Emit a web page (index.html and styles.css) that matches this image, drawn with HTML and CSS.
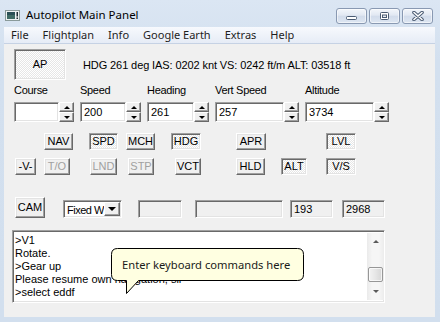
FILE: index.html
```html
<!DOCTYPE html>
<html lang="en">

<head>
    <link rel="stylesheet" href="styles.css">
    <title>Autopilot Main Panel</title>
</head>

<body>
    <div class="window">
        <div class="titlebar">
            <svg class="app-icon" width="15" height="11" viewBox="0 0 15 11">
                <rect x="0.5" y="0.5" width="14" height="10" fill="#eef2f2" stroke="#8a9a9a" />
                <rect x="2" y="2" width="8" height="7" fill="#3f6b64" />
                <rect x="2" y="2" width="8" height="3" fill="#2a4f55" />
                <rect x="11.5" y="2" width="1.5" height="4.5" fill="#1d2a30" />
                <rect x="11.5" y="7.5" width="1.5" height="1.5" fill="#1d2a30" />
            </svg>
            <span class="title">Autopilot Main Panel</span>
            <div class="caption">
                <span class="cap-btn">
                    <svg width="13" height="9" viewBox="0 0 13 9">
                        <rect x="1.5" y="4.5" width="10" height="3" rx="1" fill="#fff" stroke="#4a5b73" />
                    </svg>
                </span>
                <span class="cap-btn">
                    <svg width="13" height="10" viewBox="0 0 13 10">
                        <rect x="2.5" y="1.5" width="8" height="7" rx="1" fill="#fff" stroke="#4a5b73" />
                        <rect x="4.5" y="4" width="4" height="2.5" fill="#e4eaf2" stroke="#4a5b73" />
                    </svg>
                </span>
                <span class="cap-btn">
                    <svg width="14" height="10" viewBox="0 0 14 10">
                        <path d="M3 1.5 L11 8.5 M11 1.5 L3 8.5" stroke="#4a5b73" stroke-width="3.6" stroke-linecap="round" />
                        <path d="M3 1.5 L11 8.5 M11 1.5 L3 8.5" stroke="#fff" stroke-width="1.6" stroke-linecap="round" />
                    </svg>
                </span>
            </div>
        </div>

        <div class="menubar">
            <span>File</span>
            <span>Flightplan</span>
            <span>Info</span>
            <span>Google Earth</span>
            <span>Extras</span>
            <span>Help</span>
        </div>

        <div class="client">
            <div class="top-row">
                <button class="btn checked ap">AP</button>
                <span class="status">HDG 261 deg IAS: 0202 knt VS: 0242 ft/m ALT: 03518 ft</span>
            </div>

            <div class="spinners">
                <div class="field f-course">
                    <label>Course</label>
                    <div class="spin">
                        <div class="edit"></div>
                        <div class="spin-btns"><span class="sb up"></span><span class="sb down"></span></div>
                    </div>
                </div>
                <div class="field f-speed">
                    <label>Speed</label>
                    <div class="spin">
                        <div class="edit">200</div>
                        <div class="spin-btns"><span class="sb up"></span><span class="sb down"></span></div>
                    </div>
                </div>
                <div class="field f-heading">
                    <label>Heading</label>
                    <div class="spin">
                        <div class="edit">261</div>
                        <div class="spin-btns"><span class="sb up"></span><span class="sb down"></span></div>
                    </div>
                </div>
                <div class="field f-vs">
                    <label>Vert Speed</label>
                    <div class="spin">
                        <div class="edit">257</div>
                        <div class="spin-btns"><span class="sb up"></span><span class="sb down"></span></div>
                    </div>
                </div>
                <div class="field f-alt">
                    <label>Altitude</label>
                    <div class="spin">
                        <div class="edit">3734</div>
                        <div class="spin-btns"><span class="sb up"></span><span class="sb down"></span></div>
                    </div>
                </div>
            </div>

            <div class="modes">
                <button class="btn m-nav">NAV</button>
                <button class="btn checked m-spd">SPD</button>
                <button class="btn m-mch">MCH</button>
                <button class="btn checked m-hdg">HDG</button>
                <button class="btn m-apr">APR</button>
                <button class="btn checked m-lvl">LVL</button>

                <button class="btn m-v">-V-</button>
                <button class="btn off m-to">T/O</button>
                <button class="btn off m-lnd">LND</button>
                <button class="btn off m-stp">STP</button>
                <button class="btn m-vct">VCT</button>
                <button class="btn m-hld">HLD</button>
                <button class="btn checked m-alt">ALT</button>
                <button class="btn checked m-vsb">V/S</button>
            </div>

            <div class="tools">
                <button class="btn cam">CAM</button>
                <div class="combo">
                    <span class="combo-text">Fixed W</span>
                    <span class="combo-btn"></span>
                </div>
                <div class="readout r1"></div>
                <div class="readout r2"></div>
                <div class="readout r3">193</div>
                <div class="readout r4">2968</div>
            </div>

            <div class="log">
                <div class="lines">
                    <p>&gt;V1</p>
                    <p>Rotate.</p>
                    <p>&gt;Gear up</p>
                    <p>Please resume own navigation, sir</p>
                    <p>&gt;select eddf</p>
                </div>
                <div class="scrollbar">
                    <span class="arrow a-up"></span>
                    <div class="track"><span class="thumb"></span></div>
                    <span class="arrow a-down"></span>
                </div>

                <div class="balloon">
                    <svg width="194" height="47" viewBox="0 0 194 47">
                        <path d="M6.5 0.5 H186.5 Q192.5 0.5 192.5 6.5 V26.5 Q192.5 32.5 186.5 32.5 H27.5 L15.5 45.5 V32.5 H6.5 Q0.5 32.5 0.5 26.5 V6.5 Q0.5 0.5 6.5 0.5 Z"
                            fill="#ffffe1" stroke="#000" />
                    </svg>
                    <span class="balloon-text">Enter keyboard commands here</span>
                </div>
            </div>
        </div>
    </div>
</body>

</html>
```

FILE: styles.css
```css
* {
    margin: 0;
    padding: 0;
    box-sizing: border-box;
}

body {
    width: 440px;
    height: 322px;
    overflow: hidden;
    font-family: "Liberation Sans", Arial, sans-serif;
    font-size: 11px;
    color: #000;
}

.window {
    width: 440px;
    height: 322px;
    display: flex;
    flex-direction: column;
    background: linear-gradient(#dbe6f3, #d3e0ef 60px, #d2dfee);
}

/* title bar */
.titlebar {
    height: 27px;
    display: flex;
    align-items: flex-start;
    padding-left: 5px;
}

.app-icon {
    margin-top: 10px;
}

.title {
    margin-left: 6px;
    margin-top: 7px;
    font-family: "Noto Sans", sans-serif;
    font-size: 11.5px;
    line-height: 16px;
}

.caption {
    margin-left: auto;
    margin-top: 8px;
    margin-right: 7px;
    display: flex;
    gap: 2px;
}

.cap-btn {
    width: 31px;
    height: 16px;
    border: 1px solid #8999b2;
    border-radius: 3px;
    background: linear-gradient(#f3f6fb, #e1e8f2 45%, #d2dceb 50%, #dde6f2);
    box-shadow: inset 0 0 0 1px rgba(255, 255, 255, 0.55);
    display: flex;
    align-items: center;
    justify-content: center;
}

/* menu */
.menubar {
    height: 17px;
    margin: 0 5px 0 4px;
    display: flex;
    align-items: center;
    background: linear-gradient(#f7f9fd, #e6ecf6);
    border-bottom: 1px solid #c6d2e4;
    font-family: "Noto Sans", sans-serif;
    font-size: 11px;
    color: #1e1e1e;
}

.menubar span {
    padding: 0 7px;
    line-height: 16px;
}

/* client area */
.client {
    flex: 1;
    margin: 0 5px 5px 4px;
    background: #f0f0f0;
}

.btn {
    font-family: inherit;
    font-size: 11px;
    color: #000;
    background: #f0f0f0;
    border: 1px solid;
    border-color: #fff #696969 #696969 #fff;
    box-shadow: inset -1px -1px #a0a0a0, inset 1px 1px #e3e3e3;
    height: 17px;
    line-height: 13px;
}

.btn.checked {
    border-color: #a0a0a0 #fff #fff #a0a0a0;
    box-shadow: inset 1px 1px #696969, inset -1px -1px #e3e3e3;
    background: repeating-conic-gradient(#fff 0 25%, #e6e6e6 0 50%) 0 0 / 2px 2px;
}

.btn.off {
    color: #a0a0a0;
}

.top-row {
    display: flex;
    align-items: center;
    height: 36px;
    padding: 5px 0 0 10px;
}

.ap {
    width: 52px;
    height: 31px;
}

.status {
    margin-left: 17px;
    letter-spacing: -0.1px;
}

/* spinners */
.spinners {
    display: flex;
    gap: 6px;
    padding-left: 10px;
    margin-top: 4px;
}

.field {
    display: flex;
    flex-direction: column;
}

.field label {
    height: 13px;
    line-height: 13px;
    margin-bottom: 5px;
    letter-spacing: -0.3px;
}

.f-course { width: 60px; }
.f-speed { width: 61px; }
.f-heading { width: 62px; }
.f-vs { width: 84px; }
.f-alt { width: 84px; }

.spin {
    display: flex;
    height: 20px;
}

.edit,
.readout,
.combo,
.log {
    border: 1px solid;
    border-color: #a0a0a0 #fff #fff #a0a0a0;
    box-shadow: inset 1px 1px #696969, inset -1px -1px #e3e3e3;
    background: #fff;
}

.edit {
    flex: 1;
    padding-left: 3px;
    line-height: 18px;
}

.spin-btns {
    width: 15px;
    display: flex;
    flex-direction: column;
}

.sb {
    flex: 1;
    display: flex;
    align-items: center;
    justify-content: center;
    background: #f0f0f0;
    border: 1px solid;
    border-color: #fff #696969 #696969 #fff;
    box-shadow: inset -1px -1px #a0a0a0;
}

.sb::after {
    content: "";
    border-left: 3px solid transparent;
    border-right: 3px solid transparent;
}

.up::after {
    border-bottom: 3px solid #000;
}

.down::after {
    border-top: 3px solid #000;
}

/* mode buttons */
.modes {
    display: grid;
    grid-template-columns: 29px 45px 37px 45px 65px 45px 45px 30px;
    grid-template-rows: 17px 17px;
    row-gap: 8px;
    padding-left: 11px;
    margin-top: 11px;
}

.m-nav { grid-area: 1 / 2; width: 29px; }
.m-spd { grid-area: 1 / 3; width: 29px; }
.m-mch { grid-area: 1 / 4; width: 29px; }
.m-hdg { grid-area: 1 / 5; width: 30px; }
.m-apr { grid-area: 1 / 6; width: 30px; }
.m-lvl { grid-area: 1 / 8; width: 30px; }

.m-v { grid-area: 2 / 1; width: 21px; }
.m-to { grid-area: 2 / 2; width: 26px; }
.m-lnd { grid-area: 2 / 3; width: 27px; margin-left: 1px; }
.m-stp { grid-area: 2 / 4; width: 26px; margin-left: 2px; }
.m-vct { grid-area: 2 / 5; width: 26px; margin-left: 4px; }
.m-hld { grid-area: 2 / 6; width: 29px; }
.m-alt { grid-area: 2 / 7; width: 26px; }
.m-vsb { grid-area: 2 / 8; width: 30px; }

/* bottom tools */
.tools {
    display: flex;
    align-items: flex-end;
    padding-left: 11px;
    margin-top: 22px;
}

.cam {
    width: 30px;
    height: 21px;
}

.combo {
    width: 59px;
    height: 18px;
    margin-left: 18px;
    display: flex;
    padding: 1px;
}

.combo-text {
    flex: 1;
    padding-left: 2px;
    line-height: 16px;
    letter-spacing: -0.5px;
    overflow: hidden;
    white-space: nowrap;
}

.combo-btn {
    width: 16px;
    display: flex;
    align-items: center;
    justify-content: center;
    background: #f0f0f0;
    border: 1px solid;
    border-color: #fff #696969 #696969 #fff;
    box-shadow: inset -1px -1px #a0a0a0;
}

.combo-btn::after {
    content: "";
    border-left: 4px solid transparent;
    border-right: 4px solid transparent;
    border-top: 4px solid #000;
}

.readout {
    height: 18px;
    background: #f0f0f0;
    padding-left: 3px;
    line-height: 16px;
}

.r1 { width: 44px; margin-left: 16px; }
.r2 { width: 88px; margin-left: 13px; }
.r3 { width: 43px; margin-left: 7px; }
.r4 { width: 43px; margin-left: 9px; }

/* log */
.log {
    position: relative;
    width: 373px;
    height: 73px;
    margin: 12px 0 0 8px;
    padding: 2px 0 2px 2px;
    display: flex;
}

.lines {
    flex: 1;
    padding-top: 1px;
}

.lines p {
    line-height: 13px;
    height: 13px;
    white-space: nowrap;
}

.scrollbar {
    width: 17px;
    display: flex;
    flex-direction: column;
    background: linear-gradient(90deg, #eaeaea, #f6f6f6 30%, #f6f6f6 70%, #ececec);
}

.arrow {
    height: 17px;
    display: flex;
    align-items: center;
    justify-content: center;
}

.arrow::after {
    content: "";
    border-left: 3px solid transparent;
    border-right: 3px solid transparent;
}

.a-up::after {
    border-bottom: 3px solid #5a5a5a;
}

.a-down::after {
    border-top: 3px solid #5a5a5a;
}

.track {
    flex: 1;
    display: flex;
    flex-direction: column;
    justify-content: flex-end;
    padding: 0 1px 1px 1px;
}

.thumb {
    height: 15px;
    border: 1px solid #979797;
    border-radius: 2px;
    background: linear-gradient(90deg, #f3f3f3, #e6e6e6 50%, #d6d6d6);
    box-shadow: inset 0 0 0 1px rgba(255, 255, 255, 0.7);
}

.balloon {
    position: absolute;
    left: 98px;
    top: 17px;
    width: 194px;
    height: 47px;
}

.balloon svg {
    position: absolute;
    left: 0;
    top: 0;
}

.balloon-text {
    position: relative;
    display: block;
    padding-left: 11px;
    line-height: 33px;
    font-family: "Noto Sans", sans-serif;
    font-size: 11.2px;
    color: #1a1a1a;
}
```
